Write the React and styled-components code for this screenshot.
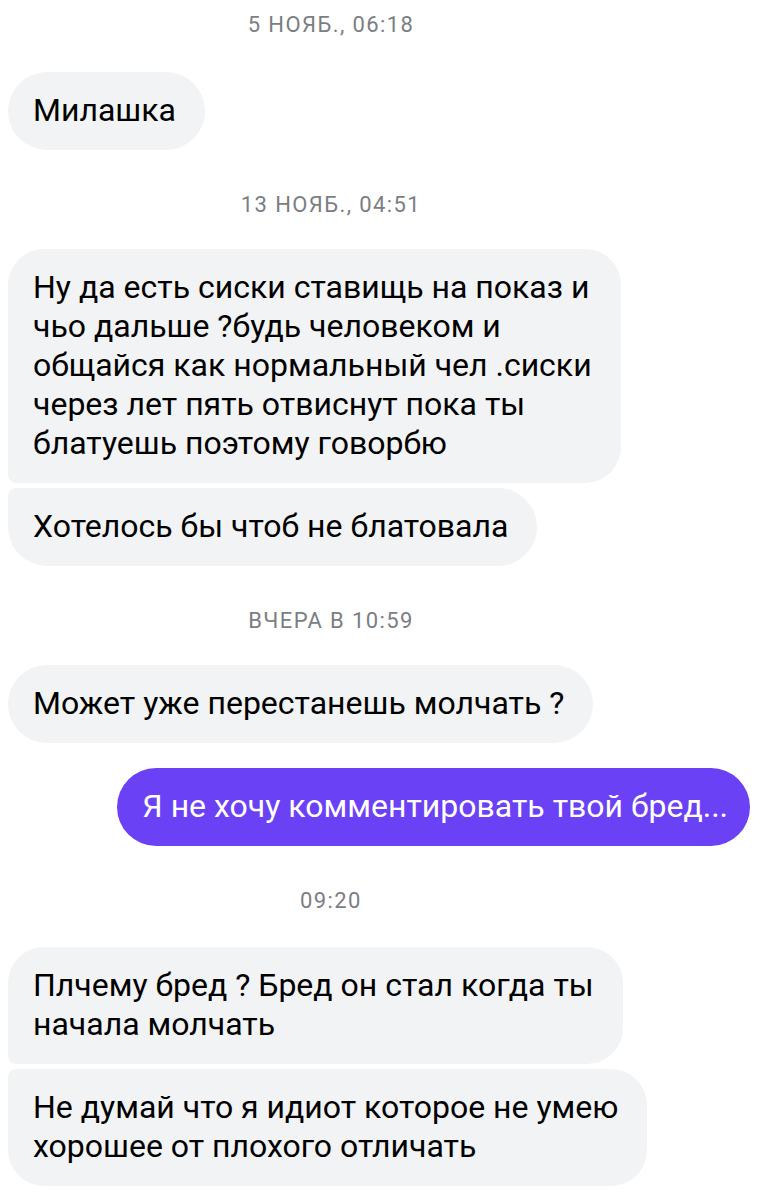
import React from 'react'
import styled, { createGlobalStyle } from 'styled-components'

const GlobalStyle = createGlobalStyle`
  body {
    margin: 0;
    background: #fff;
    font-family: Roboto, "Liberation Sans", sans-serif;
  }
`

const Feed = styled.div`
  width: 766px;
  display: flex;
  flex-direction: column;
  align-items: flex-start;
  padding: 10px 0 0 8px;
  box-sizing: border-box;
`

const DateRow = styled.div`
  align-self: stretch;
  width: 646px;
  text-align: center;
  font-size: 22px;
  line-height: 30px;
  letter-spacing: 1.4px;
  color: #7b7e83;
  margin-bottom: 29px;
  ${p => !p.$first && 'margin-top: 40px;'}
  ${p => p.$first && 'margin-bottom: 32px;'}
`

const Bubble = styled.div`
  box-sizing: border-box;
  max-width: 700px;
  padding: 19px ${p => (p.$own ? 22 : 29)}px 20px 25px;
  font-size: 32px;
  line-height: 39px;
  border-radius: ${p => p.$radius || '39px'};
  background: ${p => (p.$own ? '#6b41f6' : '#f2f3f5')};
  color: ${p => (p.$own ? '#fff' : '#000')};
  align-self: ${p => (p.$own ? 'flex-end' : 'flex-start')};
  margin-top: ${p => p.$gap || 0}px;
  white-space: nowrap;
  ${p => p.$own && 'margin-right: 16px;'}
`

const chat = [
  { date: '5 НОЯБ., 06:18', first: true },
  { lines: ['Милашка'] },
  { date: '13 НОЯБ., 04:51' },
  {
    lines: [
      'Ну да есть сиски ставищь на показ и',
      'чьо дальше ?будь человеком и',
      'общайся как нормальный чел .сиски',
      'через лет пять отвиснут пока ты',
      'блатуешь поэтому говорбю',
    ],
    radius: '36px 36px 36px 8px',
  },
  { lines: ['Хотелось бы чтоб не блатовала'], radius: '8px 39px 39px 39px', gap: 5 },
  { date: 'ВЧЕРА В 10:59' },
  { lines: ['Может уже перестанешь молчать ?'] },
  { lines: ['Я не хочу комментировать твой бред...'], own: true, gap: 25 },
  { date: '09:20' },
  {
    lines: ['Плчему бред ? Бред он стал когда ты', 'начала молчать'],
    radius: '36px 36px 36px 8px',
    gap: 2,
  },
  {
    lines: ['Не думай что я идиот которое не умею', 'хорошее от плохого отличать'],
    radius: '8px 36px 36px 36px',
    gap: 5,
  },
]

export default function App() {
  return (
    <>
      <GlobalStyle />
      <Feed>
        {chat.map((item, i) =>
          item.date ? (
            <DateRow key={i} $first={item.first}>
              {item.date}
            </DateRow>
          ) : (
            <Bubble key={i} $own={item.own} $radius={item.radius} $gap={item.gap}>
              {item.lines.map((l, j) => (
                <React.Fragment key={j}>
                  {j > 0 && <br />}
                  {l}
                </React.Fragment>
              ))}
            </Bubble>
          )
        )}
      </Feed>
    </>
  )
}
